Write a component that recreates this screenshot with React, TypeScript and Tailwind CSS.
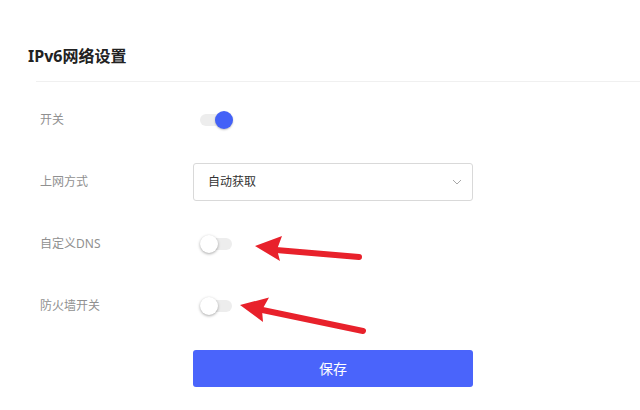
import React from "react";

const font = { fontFamily: '"Noto Sans", "Noto Sans CJK SC", sans-serif' };

function Toggle({ on }: { on: boolean }) {
  return (
    <div className="relative ml-[7px] h-[18px] w-[32px]">
      <div className="absolute left-0 top-[3px] h-[12px] w-[32px] rounded-full bg-[#ededed]" />
      {on ? (
        <div className="absolute right-[-1px] top-0 h-[18px] w-[18px] rounded-full bg-[#4361f7] shadow-[0_1px_2px_rgba(0,0,0,0.25)]" />
      ) : (
        <div className="absolute left-0 top-0 h-[18px] w-[18px] rounded-full bg-white shadow-[0_1px_3px_rgba(0,0,0,0.35)]" />
      )}
    </div>
  );
}

function Row({ label, children }: { label: string; children: React.ReactNode }) {
  return (
    <div className="flex h-[62px] items-center">
      <div className="w-[193px] shrink-0 pl-[40px] text-[12px] text-[#909090]">{label}</div>
      <div className="flex w-[280px] items-center">{children}</div>
    </div>
  );
}

export default function App() {
  return (
    <div className="relative h-[410px] w-[640px] overflow-hidden bg-white" style={font}>
      <div className="pl-[28px] pt-[45px] text-[16px] font-bold leading-[22px] text-[#222]">IPv6网络设置</div>
      <div className="ml-[36px] mt-[14px] h-[1px] bg-[#f0f0f0]" />
      <div className="pt-[7px]">
        <Row label="开关">
          <Toggle on />
        </Row>
        <Row label="上网方式">
          <div className="flex h-[38px] w-[280px] items-center justify-between rounded-[3px] border border-[#d9d9d9] pl-[14px] pr-[10px] text-[12px] text-[#333]">
            <span>自动获取</span>
            <svg width="10" height="6" viewBox="0 0 10 6" fill="none">
              <path d="M1 1L5 5L9 1" stroke="#a8a8a8" strokeWidth="1" />
            </svg>
          </div>
        </Row>
        <Row label="自定义DNS">
          <Toggle on={false} />
        </Row>
        <Row label="防火墙开关">
          <Toggle on={false} />
        </Row>
        <div className="flex h-[62px] items-center">
          <div className="w-[193px] shrink-0" />
          <button className="h-[37px] w-[280px] rounded-[3px] bg-[#4a64fb] text-[14px] text-white">保存</button>
        </div>
      </div>
      <svg className="pointer-events-none absolute left-0 top-0" width="640" height="410" viewBox="0 0 640 410">
        <line x1="276" y1="250" x2="359" y2="257" stroke="#e8212b" strokeWidth="6" strokeLinecap="round" />
        <polygon points="255,246 282,236 277,249.5 280,261" fill="#e8212b" />
        <line x1="260" y1="309.5" x2="363" y2="331" stroke="#e8212b" strokeWidth="6" strokeLinecap="round" />
        <polygon points="240,305 269,297.5 262,310 263,322" fill="#e8212b" />
      </svg>
    </div>
  );
}
